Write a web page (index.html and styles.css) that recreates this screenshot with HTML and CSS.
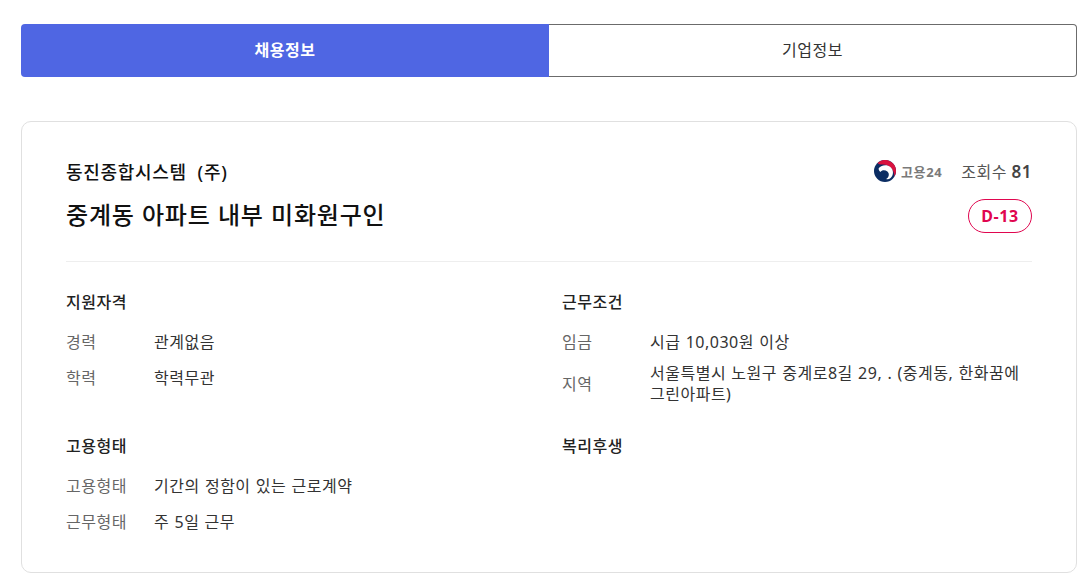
FILE: index.html
```html
<!DOCTYPE html>
<html lang="ko">
<head>
<meta charset="utf-8">
<title>채용정보</title>
<link rel="stylesheet" href="styles.css">
</head>
<body>
<main class="page">
  <nav class="tabs">
    <a class="tab tab-active">채용정보</a>
    <a class="tab tab-idle">기업정보</a>
  </nav>
  <section class="card">
    <header class="head">
      <div class="head-top">
        <div class="company">동진종합시스템&nbsp; (주)</div>
        <div class="meta">
          <span class="source">
            <svg class="taegeuk" viewBox="0 0 22 22" aria-hidden="true">
              <circle cx="11" cy="11" r="11" fill="#0b2d63"/>
              <path d="M3.6 2.9A11 11 0 0 1 22 11C22 13 21.4 15 20.4 16.6C20.6 10 15.5 4.6 9 4.4C7 4.3 5 4.8 3.6 2.9Z" fill="#d9123f"/>
              <path d="M4.6 8.6C6.2 5.4 12.6 3.8 16.4 7C19.8 10 19.8 15 16.6 18C15 19.4 13.4 19.6 12.2 19C15 17.4 15.8 13.8 13.4 11.6C11 9.6 7.8 10 6.4 12C5.4 11.4 4.6 10.2 4.6 8.6Z" fill="#fff"/>
            </svg>
            <span class="source-name">고용24</span>
          </span>
          <span class="views">조회수 <b>81</b></span>
        </div>
      </div>
      <div class="head-bottom">
        <h1 class="title">중계동 아파트 내부 미화원구인</h1>
        <span class="dday">D-13</span>
      </div>
    </header>
    <div class="info">
      <section class="group">
        <h2 class="group-title">지원자격</h2>
        <dl class="rows">
          <div class="row"><dt>경력</dt><dd>관계없음</dd></div>
          <div class="row"><dt>학력</dt><dd>학력무관</dd></div>
        </dl>
      </section>
      <section class="group">
        <h2 class="group-title">근무조건</h2>
        <dl class="rows">
          <div class="row"><dt>임금</dt><dd>시급 10,030원 이상</dd></div>
          <div class="row"><dt>지역</dt><dd>서울특별시 노원구 중계로8길 29, . (중계동, 한화꿈에 그린아파트)</dd></div>
        </dl>
      </section>
      <section class="group">
        <h2 class="group-title">고용형태</h2>
        <dl class="rows">
          <div class="row"><dt>고용형태</dt><dd>기간의 정함이 있는 근로계약</dd></div>
          <div class="row"><dt>근무형태</dt><dd>주 5일 근무</dd></div>
        </dl>
      </section>
      <section class="group">
        <h2 class="group-title">복리후생</h2>
      </section>
    </div>
  </section>
</main>
</body>
</html>
```
FILE: styles.css
```css
* { box-sizing: border-box; }
html, body { margin: 0; padding: 0; background: #fff; }
body {
  font-family: "Noto Sans", "Noto Sans CJK KR", sans-serif;
  color: #111;
  height: 586px;
  overflow: hidden;
}
.page { padding: 24px 14px 0 21px; }
.tabs {
  display: grid;
  grid-template-columns: 528px 1fr;
  height: 53px;
}
.tab {
  display: flex;
  align-items: center;
  justify-content: center;
  font-size: 16px;
  letter-spacing: 0.5px;
  color: #333;
  padding-bottom: 4px;
}
.tab-active {
  background: #4f66e3;
  color: #fff;
  font-weight: 700;
  border-radius: 4px 0 0 4px;
}
.tab-idle {
  border: 1px solid #6b6b6b;
  border-left: 0;
  border-radius: 0 4px 4px 0;
}
.card {
  margin-top: 44px;
  height: 452px;
  border: 1px solid #e0e0e0;
  border-radius: 10px;
  padding: 33px 44px 0;
}
.head { border-bottom: 1px solid #eee; height: 107px; }
.head-top, .head-bottom {
  display: flex;
  align-items: center;
  justify-content: space-between;
}
.head-top { height: 32px; }
.head-bottom { height: 58px; }
.company { font-size: 18px; font-weight: 500; letter-spacing: 0.7px; }
.meta { display: flex; align-items: center; gap: 19px; }
.source { display: flex; align-items: center; gap: 5px; }
.taegeuk { display: block; width: 22px; height: 22px; }
.source-name { font-size: 13px; font-weight: 700; color: #7a7a7a; letter-spacing: 0.6px; }
.views { font-size: 16px; color: #555; letter-spacing: 0.5px; }
.views b { font-weight: 600; color: #444; font-size: 17px; }
.title { margin: 0; padding-bottom: 2px; font-size: 24px; font-weight: 500; letter-spacing: 0.8px; word-spacing: 0.3px; line-height: 32px; }
.dday {
  width: 64px;
  height: 34px;
  border: 1px solid #e0064f;
  border-radius: 17px;
  color: #e0064f;
  font-size: 16px;
  font-weight: 700;
  letter-spacing: 0.6px;
  display: flex;
  align-items: center;
  justify-content: center;
}
.info {
  display: grid;
  grid-template-columns: 496px 1fr;
  grid-template-rows: 144px auto;
  padding-top: 28px;
}
.group-title { margin: 0 0 13px; font-size: 16px; font-weight: 500; line-height: 24px; color: #222; letter-spacing: 0.5px; }
.rows { margin: 0; display: flex; flex-direction: column; gap: 6px; }
.row { display: flex; align-items: center; min-height: 30px; font-size: 16px; line-height: 21px; letter-spacing: 0.5px; word-spacing: 0.6px; }
.row dt { width: 88px; flex: none; color: #666; }
.row dd { margin: 0; color: #333; width: 384px; }
```
